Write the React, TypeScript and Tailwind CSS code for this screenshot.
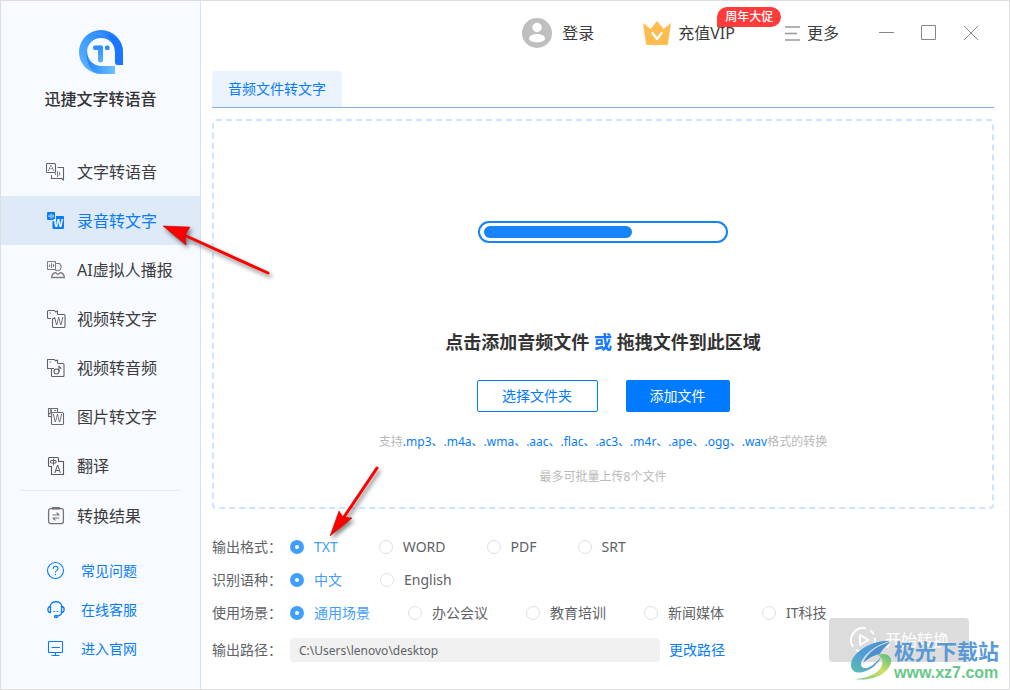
import { useState } from "react";
import type { ReactNode } from "react";
import clsx from "clsx";

interface NavItem {
  label: string;
  icon: ReactNode;
}

interface RadioRowProps {
  name: string;
  label: string;
  options: string[];
  wide?: boolean;
}

const FORMATS = [".mp3", ".m4a", ".wma", ".aac", ".flac", ".ac3", ".m4r", ".ape", ".ogg", ".wav"];

function Icon({ children }: { children: ReactNode }) {
  return (
    <svg
      className="w-5 h-5 shrink-0 font-['Liberation_Sans']"
      viewBox="0 0 20 20"
      fill="none"
      stroke="currentColor"
      strokeWidth="1.1"
      strokeLinejoin="round"
      strokeLinecap="round"
      aria-hidden="true"
    >
      {children}
    </svg>
  );
}

function IconLetter({ x, y, size, children }: { x: number; y: number; size: number; children: string }) {
  return (
    <text x={x} y={y} fontSize={size} textAnchor="middle" fill="currentColor" stroke="none">
      {children}
    </text>
  );
}

const navItems: NavItem[] = [
  {
    label: "文字转语音",
    icon: (
      <Icon>
        <g opacity="0.8">
          <rect x="0.5" y="1.5" width="9" height="9" rx="1" />
          <IconLetter x={5} y={9} size={9}>A</IconLetter>
          <path d="M12 5.5h5.5v12.500l-2-1.500h-10v-3" />
          <path d="M9.500 11.500v1M11.500 9.500v5M13.500 10.500v2.500" opacity="0.8" />
        </g>
      </Icon>
    ),
  },
  {
    label: "录音转文字",
    icon: (
      <Icon>
        <rect x="1" y="1" width="8" height="8" rx="1" fill="currentColor" stroke="none" />
        <path d="M3 4.500v1M5 3v4M7 4v2" stroke="#dfeaf8" />
        <path d="M10 5h7a1 1 0 0 1 1 1v11a1 1 0 0 1-1 1H7.500a1 1 0 0 1-1-1v-7H10z" fill="currentColor" stroke="none" />
        <text x="12.200" y="15.500" fontSize="10" fontWeight="700" textAnchor="middle" fill="#fff" stroke="none">
          W
        </text>
      </Icon>
    ),
  },
  {
    label: "AI虚拟人播报",
    icon: (
      <Icon>
        <g opacity="0.65">
          <rect x="1.500" y="1.500" width="8" height="8" rx="0.500" />
          <path d="M3.500 5v1.500M5.500 3.500v4M7.500 4.500v2" />
          <path d="M10 3.500h3.500c3 2 1.500 6-.5 7-1.500.5-3 0-4-1" />
          <path d="M5.500 17.500h13c-.5-3-2-4.500-4-5l-2.500 2-2.500-2c-2 .5-3.500 2-4 5z" strokeWidth="1.400" />
        </g>
      </Icon>
    ),
  },
  {
    label: "视频转文字",
    icon: (
      <Icon>
        <g opacity="0.8">
          <path d="M4.500 9.500h-2a1 1 0 0 1-1-1v-6a1 1 0 0 1 1-1h6l1 1.500 2-1v3" />
          <path d="M4 4h.500" />
          <path d="M12 5.500h6a1 1 0 0 1 1 1v11a1 1 0 0 1-1 1H7.500a1 1 0 0 1-1-1v-8h2" />
          <IconLetter x={12.8} y={16} size={10}>W</IconLetter>
        </g>
      </Icon>
    ),
  },
  {
    label: "视频转音频",
    icon: (
      <Icon>
        <g opacity="0.8">
          <path d="M4.500 10.500h-3v-9h7l1 1.500 2-1v3" />
          <path d="M4 4h.500" />
          <path d="M12 5.500h5a1 1 0 0 1 1 1v11a1 1 0 0 1-1 1H6.500a1 1 0 0 1-1-1v-7h2" />
          <circle cx="10.500" cy="13.500" r="2.500" />
          <path d="M13 13.500v-5.500c0 1.500 1.500 1 2 2.500" />
        </g>
      </Icon>
    ),
  },
  {
    label: "图片转文字",
    icon: (
      <Icon>
        <g opacity="0.75">
          <path d="M5.500 9.500h-3v-8h9v3.500M2.500 7.500l3-2.500" />
          <circle cx="5" cy="3.500" r="0.700" />
          <path d="M8.500 3.500h1" />
          <rect x="5.500" y="5.500" width="12" height="12" rx="1" />
          <IconLetter x={11.5} y={15} size={10}>W</IconLetter>
        </g>
      </Icon>
    ),
  },
  {
    label: "翻译",
    icon: (
      <Icon>
        <g opacity="0.85">
          <path d="M5.500 10.500h-2a1 1 0 0 1-1-1v-7a1 1 0 0 1 1-1h8a1 1 0 0 1 1 1v3" />
          <path d="M5 4.500h5v2.500H5zM7.500 3v6" strokeWidth="0.900" />
          <path d="M12.500 5.500h5v13h-12v-8" />
          <IconLetter x={11.5} y={16.5} size={10}>A</IconLetter>
        </g>
      </Icon>
    ),
  },
];

const links: NavItem[] = [
  {
    label: "常见问题",
    icon: (
      <Icon>
        <circle cx="9.500" cy="9.500" r="8" />
        <path d="M7.200 7.500c0-3 4.800-3 4.800 0 0 1.800-2.500 2-2.500 3.800M9.500 13.300v.4" />
      </Icon>
    ),
  },
  {
    label: "在线客服",
    icon: (
      <Icon>
        <path d="M4 7c.5-7 11.500-7 12 0" strokeWidth="1.300" />
        <path d="M4.500 6.500c-3.500 0-3.500 6 0 6zM15.500 6.500c3.500 0 3.500 6 0 6zM15.500 12.500c0 2-1.500 3-4 3.500" strokeWidth="1.300" />
        <ellipse cx="10" cy="16.500" rx="1.500" ry="1" strokeWidth="1.300" />
        <path d="M8 11.500h.8M11 11.500h.8" />
      </Icon>
    ),
  },
  {
    label: "进入官网",
    icon: (
      <Icon>
        <rect x="2.500" y="2.500" width="14" height="11" rx="0.500" />
        <path d="M6 8.500h7.500M9.500 13.500v3M6 16.500h7" />
      </Icon>
    ),
  },
];

function Logo() {
  return (
    <svg className="w-11 h-11" viewBox="0 0 44 44" aria-hidden="true">
      <defs>
        <linearGradient id="ring" x1="0" y1="1" x2="1" y2="0">
          <stop offset="0" stopColor="#62b8ff" />
          <stop offset="0.5" stopColor="#3c9bff" />
          <stop offset="1" stopColor="#1673ff" />
        </linearGradient>
        <linearGradient id="ringTop" x1="0" y1="0" x2="1" y2="0">
          <stop offset="0" stopColor="#4ca8ff" />
          <stop offset="0.6" stopColor="#1a75ff" />
        </linearGradient>
        <linearGradient id="ringBottom" x1="0" y1="0" x2="1" y2="0">
          <stop offset="0" stopColor="#2584ff" />
          <stop offset="1" stopColor="#6cc1ff" />
        </linearGradient>
        <linearGradient id="stem" x1="0" y1="0" x2="0" y2="1">
          <stop offset="0" stopColor="#2f8cff" />
          <stop offset="1" stopColor="#5ab2ff" />
        </linearGradient>
      </defs>
      <path
        d="M22 0a22 22 0 0 1 22 22v13h-4c-3 0-4-1-4-4v-9A14 14 0 1 0 22 36h12c2 0 2 1 2 3v5H22a22 22 0 0 1 0-44z"
        fill="url(#ring)"
      />
      <path d="M14 4C28-1 44 8 44 22v13h-4c-3 0-4-1-4-4v-9C36 10 26 4 14 4z" fill="url(#ringTop)" />
      <path d="M8 20c0 12 8 16 14 16h12c2 0 2 1 2 3v5H22C12 44 6 32 8 20z" fill="url(#ringBottom)" />
      <rect x="14" y="15.500" width="10" height="4.500" rx="2" fill="#2f8cff" />
      <rect x="19" y="15.500" width="5" height="17" rx="2.500" fill="url(#stem)" />
      <rect x="26" y="15.500" width="4.500" height="4.500" rx="1.500" fill="#2f8cff" />
    </svg>
  );
}

function Sidebar() {
  const [active, setActive] = useState("录音转文字");

  return (
    <aside className="w-[200px] shrink-0 bg-[#f7faff] border-r border-[#cfe4fa] flex flex-col">
      <div className="flex flex-col items-center pt-[29px] h-[146px]">
        <Logo />
        <h1 className="mt-[13px] text-base leading-6 font-medium text-[#333]">迅捷文字转语音</h1>
      </div>
      <nav>
        {navItems.map((item) => (
          <button
            key={item.label}
            onClick={() => setActive(item.label)}
            className={clsx(
              "w-full h-[49px] pl-[45px] flex items-center gap-[11px] text-base",
              active === item.label ? "bg-[#dfeaf8] text-[#087cf8]" : "text-[#3c3c3c]"
            )}
          >
            {item.icon}
            {item.label}
          </button>
        ))}
        <div className="mx-5 border-t border-[#dfedfb]" />
        <button className="w-full h-[49px] pl-[45px] flex items-center gap-[11px] text-base text-[#3c3c3c]">
          <Icon>
            <g opacity="0.7">
              <rect x="2.600" y="2.600" width="14.800" height="15" rx="2" strokeWidth="1.300" />
              <path d="M6 1h8v2.500H6z" fill="currentColor" stroke="none" />
              <path d="M7 9h6l-2-2M13 12H7l2 2" />
            </g>
          </Icon>
          转换结果
        </button>
      </nav>
      <div className="mt-[11px]">
        {links.map((item) => (
          <a
            key={item.label}
            href="#"
            className="h-[39px] pl-[45px] flex items-center gap-[15px] text-sm text-[#087cf8]"
          >
            {item.icon}
            {item.label}
          </a>
        ))}
      </div>
    </aside>
  );
}

function Header() {
  return (
    <header className="h-16 shrink-0 pr-[30px] flex items-center justify-end text-base text-[#3c3c3c]">
      <button className="flex items-center gap-2.5">
        <svg className="w-[30px] h-[30px]" viewBox="0 0 30 30" aria-hidden="true">
          <circle cx="15" cy="15" r="15" fill="#bfbfbf" />
          <circle cx="15" cy="9.500" r="4.700" fill="#fff" />
          <path d="M7 20.500c0-6 16-6 16 0 0 5-16 5-16 0z" fill="#fff" />
        </svg>
        登录
      </button>
      <button className="relative ml-[49px] flex items-center gap-[7px]">
        <svg className="w-7 h-6" viewBox="0 0 28 24" aria-hidden="true">
          <path
            d="M0 2l7.500 6L14 0l6.500 8L28 2l-3 20.500c-.2 1-.8 1.500-1.700 1.500H4.700c-.9 0-1.500-.5-1.700-1.500z"
            fill="#fdbc4e"
          />
          <path d="M9.500 12l4.500 6 4.500-6" fill="none" stroke="#fff" strokeWidth="2.200" strokeLinecap="round" strokeLinejoin="round" />
        </svg>
        充值VIP
        <span className="absolute left-[74px] -top-3.5 w-16 h-5 flex items-center justify-center rounded-[10px] rounded-bl-none bg-[#ff3b3b] text-xs font-medium text-white">
          周年大促
        </span>
      </button>
      <button className="ml-[50px] flex items-center gap-[7px]">
        <svg className="w-[15px] h-[15px]" viewBox="0 0 15 15" stroke="#999" strokeWidth="1.600" aria-hidden="true">
          <path d="M0 1h15M0 7.500h12M0 14h15" />
        </svg>
        更多
      </button>
      <div className="ml-10 flex items-center gap-[26px] text-[#888]">
        <button aria-label="最小化">
          <svg className="w-4 h-4" viewBox="0 0 16 16" stroke="currentColor">
            <path d="M0 7.500h15" />
          </svg>
        </button>
        <button aria-label="最大化">
          <svg className="w-4 h-4" viewBox="0 0 16 16" stroke="currentColor" fill="none">
            <path d="M0.500 0.500h14v14h-14z" />
          </svg>
        </button>
        <button aria-label="关闭">
          <svg className="w-4 h-4" viewBox="0 0 16 16" stroke="currentColor">
            <path d="M1 1l14 14M15 1L1 15" />
          </svg>
        </button>
      </div>
    </header>
  );
}

function DropZone() {
  return (
    <section className="mt-[11px] flex-1 border-2 border-dashed border-[#cce4ff] rounded-[4px] pt-[100px] pb-5 flex flex-col items-center">
      <div
        role="progressbar"
        aria-valuenow={62}
        className="w-[250px] h-[22px] p-1 flex items-center border-2 border-[#1683f8] rounded-full"
      >
        <div className="h-3 rounded-full bg-[#1683f8]" style={{ width: "62%" }} />
      </div>
      <h2 className="mt-[85px] text-lg leading-7 font-bold text-[#333]">
        点击添加音频文件 <span className="text-[#1677ff]">或</span> 拖拽文件到此区域
      </h2>
      <div className="mt-6 flex gap-7 text-sm">
        <button className="w-[121px] h-8 border border-[#007aff] rounded-[2px] bg-white text-[#007aff]">
          选择文件夹
        </button>
        <button className="w-[104px] h-8 rounded-[2px] bg-[#007aff] text-white">添加文件</button>
      </div>
      <p className="mt-5 text-xs leading-5 text-[#b9b9b9]">
        支持<span className="text-[#087cf8]">{FORMATS.join("、")}</span>格式的转换
      </p>
      <p className="mt-[15px] text-xs leading-5 text-[#b9b9b9]">最多可批量上传8个文件</p>
    </section>
  );
}

function RadioRow({ name, label, options, wide }: RadioRowProps) {
  const [value, setValue] = useState(options[0]);

  return (
    <div role="radiogroup" aria-label={label} className="h-[33px] flex items-center">
      <span className="w-[78px] shrink-0">{label}：</span>
      <div className={clsx("flex items-center", wide ? "gap-[41px]" : "gap-[38px]")}>
        {options.map((option) => (
          <label
            key={option}
            className={clsx("flex items-center gap-2.5 whitespace-nowrap", value === option && "text-[#409eff]")}
          >
            <input
              type="radio"
              name={name}
              checked={value === option}
              onChange={() => setValue(option)}
              className="appearance-none w-3.5 h-3.5 rounded-full bg-white border border-[#dcdfe6] checked:border-5 checked:border-[#409eff]"
            />
            {option}
          </label>
        ))}
      </div>
    </div>
  );
}

function OutputSettings() {
  return (
    <div className="pt-[21px] pb-[27px] flex items-end text-sm text-[#606266]">
      <div className="flex-1">
        <RadioRow name="format" label="输出格式" options={["TXT", "WORD", "PDF", "SRT"]} wide />
        <RadioRow name="language" label="识别语种" options={["中文", "English"]} />
        <RadioRow name="scene" label="使用场景" options={["通用场景", "办公会议", "教育培训", "新闻媒体", "IT科技"]} />
        <div className="mt-[9px] h-6 flex items-center">
          <label htmlFor="path" className="w-[78px] shrink-0">
            输出路径：
          </label>
          <input
            id="path"
            readOnly
            value="C:\Users\lenovo\desktop"
            className="w-[370px] h-6 px-[9px] rounded-[4px] bg-[#f1f1f1] text-xs"
          />
          <a href="#" className="ml-[9px] text-[#087cf8]">
            更改路径
          </a>
        </div>
      </div>
      <button className="mr-[25px] w-[140px] h-11 flex items-center justify-center gap-2 rounded-[4px] bg-[#dcdcdc] text-base text-white">
        <svg className="w-7 h-7" viewBox="0 0 28 28" fill="none" stroke="#fff" strokeWidth="2" aria-hidden="true">
          <path d="M17 2.400A12 12 0 0 0 4 20.600M7 23.800A12 12 0 0 0 25.900 12M24.500 8.400a12 12 0 0 0-3-3.800" />
          <path d="M11 9v10l8.500-5z" strokeLinejoin="round" />
        </svg>
        开始转换
      </button>
    </div>
  );
}

function Pointers() {
  return (
    <>
      <svg
        className="absolute left-[154px] top-[214px] w-[125px] h-[70px] pointer-events-none drop-shadow-[2px_3px_2px_rgba(0,0,0,0.5)]"
        viewBox="0 0 125 70"
        aria-hidden="true"
      >
        <path d="M29 20l84 38" stroke="#f00" strokeWidth="3" strokeLinecap="round" />
        <path d="M8 11l27 1-5 8 1 10z" fill="#f00" stroke="#a00" strokeWidth="0.500" />
      </svg>
      <svg
        className="absolute left-[319px] top-[459px] w-[70px] h-[85px] pointer-events-none drop-shadow-[2px_3px_2px_rgba(0,0,0,0.5)]"
        viewBox="0 0 70 85"
        aria-hidden="true"
      >
        <path d="M24 57L57 8" stroke="#f00" strokeWidth="3" strokeLinecap="round" />
        <path d="M10 76l9-25 4 6 9 1z" fill="#f00" stroke="#a00" strokeWidth="0.500" />
      </svg>
    </>
  );
}

function SiteMark() {
  return (
    <div className="absolute right-[10px] bottom-[6px] flex items-center gap-[2px] pointer-events-none">
      <svg className="w-[41px] h-10" viewBox="0 0 41 40" aria-hidden="true">
        <defs>
          <linearGradient id="swirl" x1="1" y1="0" x2="0" y2="1">
            <stop offset="0" stopColor="#4b8fd3" />
            <stop offset="0.600" stopColor="#4fa0d6" />
            <stop offset="1" stopColor="#5cc0a8" />
          </linearGradient>
          <linearGradient id="tail" x1="0" y1="1" x2="1" y2="0">
            <stop offset="0" stopColor="#6ccb84" />
            <stop offset="0.550" stopColor="#d3df62" />
            <stop offset="1" stopColor="#4fb98c" />
          </linearGradient>
        </defs>
        <path d="M39 0C20-1 0 12 0 24c0 6 5 9 12 7 8-2 15-8 18-15-6 7-12 12-17 11-5-1-3-8 1-12C20 8 28 3 39 0z" fill="url(#swirl)" />
        <path d="M12 22C17 11 27 4 40 1c-6 4-9 8-11 12-6 1-12 4-17 9z" fill="#4b8fd3" />
        <path d="M27 14c8-3 14 1 13 7-1 9-15 20-36 17 15-1 25-7 27-14 1-4 0-7-4-10z" fill="url(#tail)" />
      </svg>
      <div className="flex flex-col">
        <span className="text-[21px] leading-6 font-bold text-[#5999d6]">极光下载站</span>
        <span className="text-base leading-5 font-bold font-['Liberation_Sans'] text-[#66c888]">www.xz7.com</span>
      </div>
    </div>
  );
}

export default function App() {
  return (
    <div className="relative min-h-screen flex border border-[#dedede] bg-white font-['Noto_Sans','Noto_Sans_CJK_SC',sans-serif]">
      <Sidebar />
      <main className="flex-1 min-w-0 flex flex-col">
        <Header />
        <div className="flex-1 mt-1.5 pl-[11px] pr-[15px] flex flex-col">
          <div className="border-b border-[#86afe2]">
            <button className="w-[130px] h-9 rounded-t-[4px] bg-[#ebf3ff] text-sm text-[#087cf8]">
              音频文件转文字
            </button>
          </div>
          <DropZone />
          <OutputSettings />
        </div>
      </main>
      <Pointers />
      <SiteMark />
    </div>
  );
}
